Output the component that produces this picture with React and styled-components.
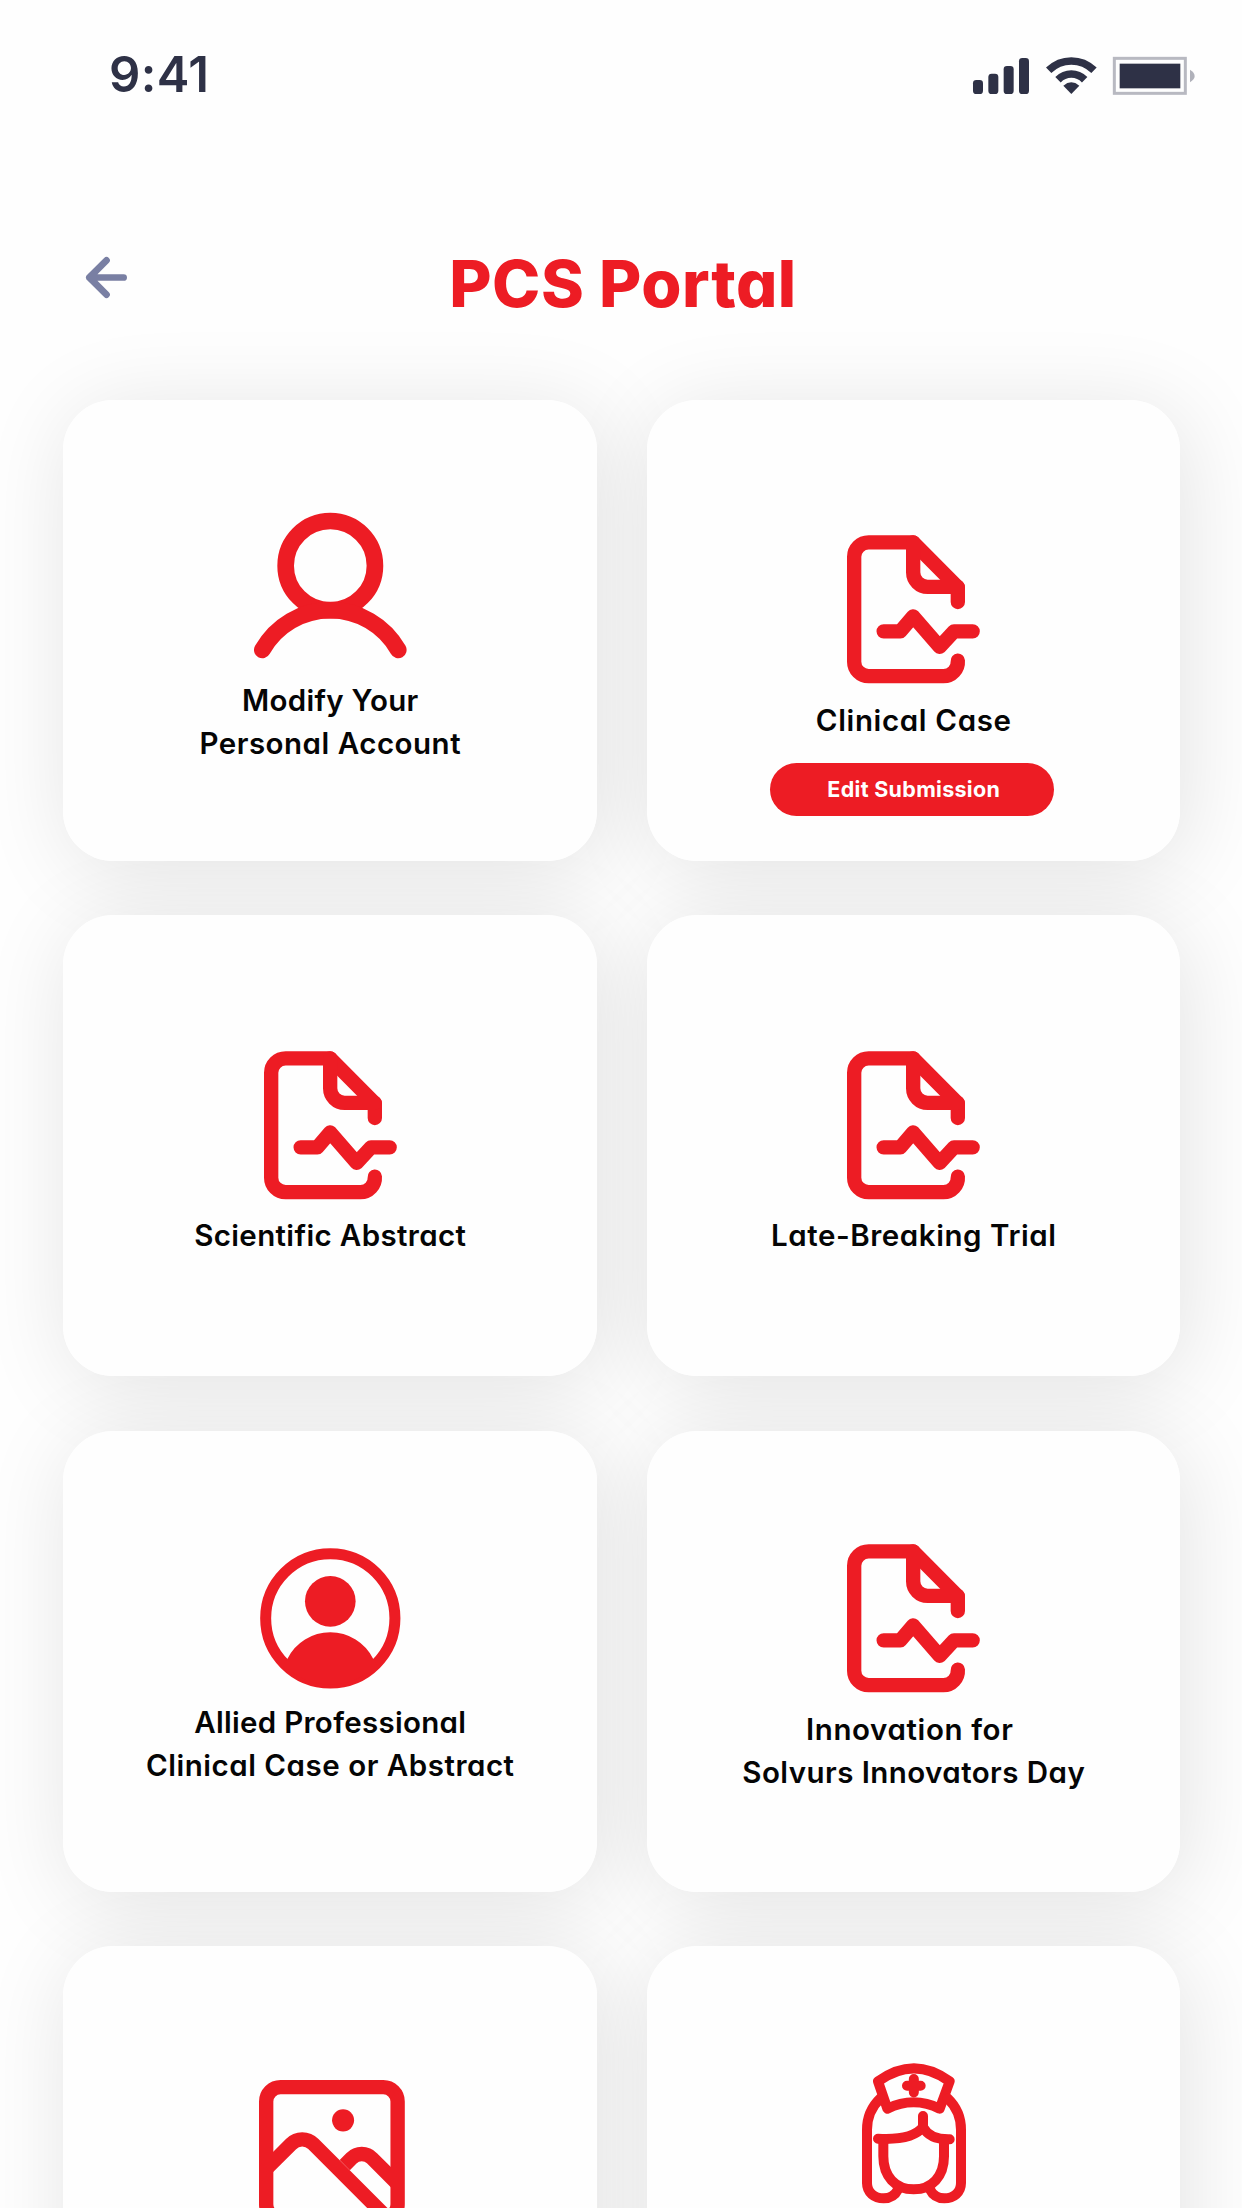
import React from "react";
import styled, { createGlobalStyle } from "styled-components";

const RED = "#ed1c24";
const INK = "#2e3146";

const GlobalStyle = createGlobalStyle`
  * { box-sizing: border-box; }
  body {
    margin: 0;
    background: #fefefe;
    font-family: Inter, "Open Sans", sans-serif;
    font-feature-settings: "cv11" 1;
  }
  svg {
    display: block;
    flex: none;
    overflow: visible;
  }
`;

const Screen = styled.main`
  width: 1242px;
  height: 2208px;
  overflow: hidden;
  display: flex;
  flex-direction: column;
  background: #fefefe;
`;

const StatusBar = styled.header`
  height: 150px;
  padding: 0 47px 0 109px;
  display: flex;
  justify-content: space-between;
  flex: none;
`;

const Clock = styled.time`
  margin-top: 45px;
  font-size: 49px;
  line-height: 60px;
  font-weight: 600;
  letter-spacing: 0.4px;
  color: ${INK};
`;

const Indicators = styled.div`
  display: flex;
  align-items: flex-start;
  padding-top: 56.5px;
  gap: 16px;
`;

const TitleBar = styled.div`
  height: 250px;
  flex: none;
  display: grid;
  grid-template-columns: 1fr auto 1fr;
  align-items: start;
  padding: 0 82px 0 86px;
`;

const BackButton = styled.button`
  border: 0;
  padding: 0;
  margin-top: 107px;
  background: none;
  width: 41px;
  height: 41px;
  display: flex;
`;

const Title = styled.h1`
  margin: 95px 0 0;
  font-size: 65px;
  line-height: 78px;
  font-weight: 800;
  letter-spacing: 0.5px;
  color: ${RED};
`;

const CardGrid = styled.section`
  position: relative;
  z-index: 0;
  display: grid;
  grid-template-columns: 533.5px 533.5px;
  grid-auto-rows: 461px;
  gap: 54.4px 50px;
  padding-left: 63px;
`;

const Card = styled.article`
  position: relative;
  display: flex;
  flex-direction: column;
  align-items: center;
  padding-top: ${(p) => p.$top}px;
  padding-left: ${(p) => p.$shift || 0}px;
  border-radius: 50px;
  background: #fefefe;

  &::before {
    content: "";
    position: absolute;
    inset: 0;
    z-index: -1;
    border-radius: inherit;
    box-shadow: 6px 10px 90px rgba(0, 0, 0, 0.11);
  }
`;

const Label = styled.h2`
  margin: ${(p) => p.$gap}px 0 0;
  display: flex;
  flex-direction: column;
  align-items: center;
  font-size: 29.5px;
  line-height: 43.2px;
  font-weight: 600;
  color: #050505;
  white-space: nowrap;
`;

const Line = styled.span`
  letter-spacing: ${(p) => p.$tracking}px;
`;

const EditButton = styled.button`
  margin: 21px 3px 0 0;
  width: 284px;
  height: 53px;
  flex: none;
  border: 0;
  border-radius: 27px;
  padding: 0 0 0 3px;
  background: ${RED};
  color: #fff;
  font-family: inherit;
  font-feature-settings: inherit;
  font-size: 21.5px;
  line-height: 53px;
  font-weight: 700;
  letter-spacing: 0.3px;
`;

const SignalIcon = () => (
  <svg width="56" height="38" viewBox="101 79 168 114" fill={INK}>
    <rect x="101" y="148" width="30" height="42" rx="10" />
    <rect x="147" y="129" width="30" height="61" rx="10" />
    <rect x="193" y="106" width="30" height="84" rx="10" />
    <rect x="239" y="82" width="30" height="108" rx="10" />
  </svg>
);

const WifiIcon = () => (
  <svg width="52" height="38" viewBox="316 79 156 114" fill="none" stroke={INK} strokeWidth="23">
    <path d="M327 119 Q356 91 395 91 Q434 91 463 119" />
    <path d="M355 147 Q372 130 395 130 Q418 130 435 147" />
    <path d="M371 165 Q395 145 419 165 L395 190 Z" fill={INK} stroke="none" />
  </svg>
);

const BatteryIcon = () => (
  <svg width="82" height="38" viewBox="520 79 246 114">
    <rect x="524" y="83" width="213" height="105" fill="none" stroke="#b8b9c1" strokeWidth="9" />
    <rect x="540" y="99" width="182" height="74" fill={INK} />
    <path d="M751 117 Q765 126 765 136 Q765 146 751 155 Z" fill="#b0b1ba" />
  </svg>
);

const ArrowIcon = () => (
  <svg width="41" height="41" viewBox="0 0 122 122" fill="none" stroke="#797fa3" strokeWidth="20" strokeLinecap="round" strokeLinejoin="round">
    <path d="M112 61H10M61 10L10 61L61 112" />
  </svg>
);

const UserIcon = () => (
  <svg width="152.6" height="146.6" viewBox="0 0 458 440" fill="none" stroke={RED} strokeWidth="50" strokeLinecap="round">
    <circle cx="229" cy="161" r="134" />
    <path d="M25 414A234 234 0 0 1 433 414" />
  </svg>
);

const DocumentIcon = () => (
  <svg width="133" height="148.5" viewBox="0 0 399 445.5" fill="none" stroke={RED} strokeWidth="43" strokeLinecap="round" strokeLinejoin="round">
    <path d="M332.5 201V157L198.5 22H65A43.5 43.5 0 0 0 21.5 65.5V380A43.5 43.5 0 0 0 65 423.5H289A43.5 43.5 0 0 0 332.5 377" />
    <path d="M198.5 22V112A43.5 43.5 0 0 0 242 155.5H332" />
    <path d="M110 289H160L198.5 244L278 335.5L321 289H377" />
  </svg>
);

const ProfileIcon = () => (
  <svg width="140.6" height="140.6" viewBox="-211 -211 422 422" fill={RED}>
    <circle r="194" fill="none" stroke={RED} strokeWidth="33" />
    <circle cy="-51" r="76" />
    <path d="M-129 122A144 144 0 0 1 129 122L140 140A196 196 0 0 1 -140 140Z" />
  </svg>
);

const PictureIcon = () => (
  <svg width="145.8" height="145.8" viewBox="0 0 437 437" fill="none" stroke={RED} strokeWidth="43">
    <rect x="21.5" y="21.5" width="394" height="394" rx="43" />
    <path d="M22 266L96 192A47 47 0 0 1 163 192L390 419" />
    <path d="M257 255L277 235A43 43 0 0 1 339 235L417 313" />
    <circle cx="252" cy="121" r="33" fill={RED} stroke="none" />
  </svg>
);

const NurseIcon = () => (
  <svg width="104" height="140.7" viewBox="95 70 312 422" fill="none" stroke={RED} strokeWidth="30" strokeLinecap="round" strokeLinejoin="round">
    <path d="M143 125Q251 47 358 125L328 207Q250 169 171 207Z" />
    <path d="M230 138H271M250.500 118V158" />
    <path d="M150 176C125 200 110 235 110 270V430C110 458 132 476 160 476C180 476 195 466 204 448" />
    <path d="M352 176C377 200 392 235 392 270V430C392 458 370 476 342 476C322 476 307 466 298 448" />
    <path d="M143 297C200 300 255 292 278 262V229M278 262C290 285 315 300 358 299" />
    <path d="M159 300V350C159 410 195 449 250 449C305 449 341 410 341 350V300" />
  </svg>
);

const cards = [
  { id: "account", top: 112, shift: 1, Icon: UserIcon, gap: 20.5, lines: [["Modify Your", 0.28], ["Personal Account", 0.5]] },
  { id: "clinical", top: 135.3, shift: 1, Icon: DocumentIcon, gap: 15.3, lines: [["Clinical Case", 0.65]], action: "Edit Submission" },
  { id: "scientific", top: 135.3, shift: 1, Icon: DocumentIcon, gap: 15.3, lines: [["Scientific Abstract", 0.36]] },
  { id: "trial", top: 135.3, shift: 1, Icon: DocumentIcon, gap: 15.3, lines: [["Late-Breaking Trial", 0.56]] },
  { id: "allied", top: 117, shift: 1, Icon: ProfileIcon, gap: 12.6, lines: [["Allied Professional", 0.3], ["Clinical Case or Abstract", 0.52]] },
  { id: "innovation", top: 113.5, shift: 1, Icon: DocumentIcon, gap: 15, lines: [["Innovation for\u00a0", 0.62], ["Solvurs Innovators Day", 0.44]] },
  { id: "gallery", top: 133.5, shift: 4, Icon: PictureIcon, lines: [] },
  { id: "nurse", top: 117, shift: 1, Icon: NurseIcon, lines: [] },
];

export default function App() {
  return (
    <>
      <GlobalStyle />
      <Screen>
        <StatusBar>
          <Clock>9:41</Clock>
          <Indicators>
            <SignalIcon />
            <WifiIcon />
            <BatteryIcon />
          </Indicators>
        </StatusBar>
        <TitleBar>
          <BackButton aria-label="Back">
            <ArrowIcon />
          </BackButton>
          <Title>PCS Portal</Title>
        </TitleBar>
        <CardGrid>
          {cards.map(({ id, top, shift, Icon, gap, lines, action }) => (
            <Card key={id} $top={top} $shift={shift}>
              <Icon />
              {lines.length > 0 && (
                <Label $gap={gap}>
                  {lines.map(([text, tracking]) => (
                    <Line key={text} $tracking={tracking}>{text}</Line>
                  ))}
                </Label>
              )}
              {action && <EditButton>{action}</EditButton>}
            </Card>
          ))}
        </CardGrid>
      </Screen>
    </>
  );
}
